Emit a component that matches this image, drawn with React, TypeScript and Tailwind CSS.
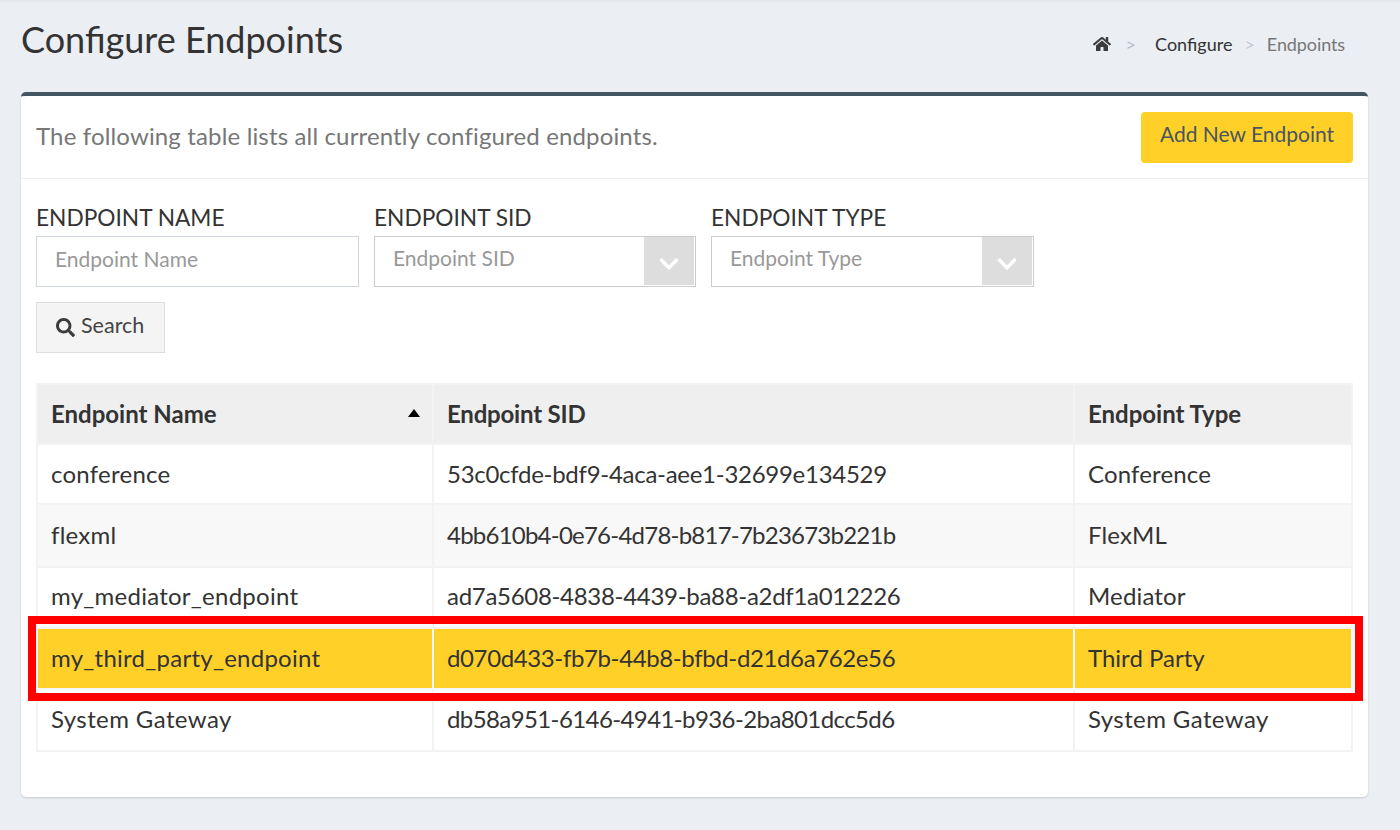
import { FaChevronDown, FaHome, FaSearch } from "react-icons/fa";

const rows = [
  { name: "conference", sid: "53c0cfde-bdf9-4aca-aee1-32699e134529", type: "Conference", h: "h-[60px]", bg: "bg-white", pad: "pb-0", sidTrack: "tracking-[-0.28px]" },
  { name: "flexml", sid: "4bb610b4-0e76-4d78-b817-7b23673b221b", type: "FlexML", h: "h-[63px]", bg: "bg-[#f8f8f8]", pad: "pb-[2px]", sidTrack: "tracking-[-0.77px]" },
  { name: "my_mediator_endpoint", sid: "ad7a5608-4838-4439-ba88-a2df1a012226", type: "Mediator", h: "h-[61px]", bg: "bg-white", pad: "pb-[4px]", sidTrack: "tracking-[-0.3px]" },
];

function SelectBox({ label, placeholder, width }: { label: string; placeholder: string; width: string }) {
  return (
    <div className={width}>
      <div className="text-[22.7px] leading-[26px] text-[#333333] h-[31px]">{label}</div>
      <div className="flex h-[51px] border border-[#cccccc] bg-white justify-between pr-[1px] pb-[1px]">
        <span className="pl-[18px] pt-[7px] text-[21px] leading-[28px] text-[#999999]">{placeholder}</span>
        <span className="w-[50px] bg-[#dddddd] flex items-center justify-center text-white pt-[6px]">
          <FaChevronDown size={22} />
        </span>
      </div>
    </div>
  );
}

export default function App() {
  return (
    <div className="min-h-[830px] bg-[#ebeef3] font-['Lato','Liberation_Sans',sans-serif] border-t-2 border-[#e3e6ea] pl-[21px] pr-[32px]">
      <div className="flex justify-between h-[90px]">
        <h1 className="text-[36px] leading-[40px] mt-[17px] text-[#333333]">Configure Endpoints</h1>
        <div className="flex items-center h-[24px] mt-[30px] mr-[23px] text-[18px] text-[#333333]">
          <FaHome size={18} className="text-[#3c3c3c]" />
          <span className="ml-[15px] text-[#b9bdc4]">&gt;</span>
          <span className="ml-[19px]">Configure</span>
          <span className="ml-[12px] text-[#c4c7cc]">&gt;</span>
          <span className="ml-[12px] text-[#777777] tracking-[-0.1px]">Endpoints</span>
        </div>
      </div>

      <div className="relative h-[705px] bg-white border-t-4 border-[#435563] rounded-[5px] shadow-[0_1px_2px_rgba(0,0,0,0.15)]">
        <div className="flex items-center justify-between h-[83px] border-b border-[#f1f1f1] pl-[15px] pr-[15px]">
          <p className="text-[24px] tracking-[0.15px] text-[#777777] pb-[2px]">The following table lists all currently configured endpoints.</p>
          <button className="w-[212px] h-[51px] pb-[6px] rounded-[4px] bg-[#ffd128] text-[21px] text-[#4a5560]">Add New Endpoint</button>
        </div>

        <div className="pl-[15px] pt-[26px]">
          <div className="flex gap-[15px]">
            <div className="w-[323px]">
              <div className="text-[22.7px] leading-[26px] text-[#333333] h-[31px]">ENDPOINT NAME</div>
              <div className="h-[51px] border border-[#cfd6e0] bg-white pl-[18px] pt-[8px] text-[21px] leading-[28px] text-[#999999]">Endpoint Name</div>
            </div>
            <SelectBox label="ENDPOINT SID" placeholder="Endpoint SID" width="w-[322px]" />
            <SelectBox label="ENDPOINT TYPE" placeholder="Endpoint Type" width="w-[323px]" />
          </div>

          <button className="flex items-center gap-[6px] mt-[15px] w-[129px] h-[51px] pl-[19px] pb-[4px] border border-[#dddddd] bg-[#f4f4f4] text-[21.5px] text-[#444444]">
            <FaSearch size={19} className="text-[#3c3c3c] mt-[3px]" />
            Search
          </button>
        </div>

        <div className="px-[15px] pt-[30px]">
          <table className="w-[1317px] table-fixed border-collapse border-2 border-[#f3f3f3] text-[24px] text-[#333333]">
            <colgroup>
              <col className="w-[396px]" />
              <col className="w-[641px]" />
              <col className="w-[278px]" />
            </colgroup>
            <thead>
              <tr className="h-[60px] bg-[#efefef] font-bold text-left">
                <th className="relative border-2 border-[#f3f3f3] pl-[13px]">
                  Endpoint Name
                  <span className="absolute right-[12px] top-[24px] w-0 h-0 border-x-[6px] border-x-transparent border-b-[8px] border-b-black" />
                </th>
                <th className="border-2 border-[#f3f3f3] pl-[13px] tracking-[-0.2px]">Endpoint SID</th>
                <th className="border-2 border-[#f3f3f3] pl-[13px]">Endpoint Type</th>
              </tr>
            </thead>
            <tbody>
              {rows.map((r) => (
                <tr key={r.name} className={`${r.h} ${r.bg}`}>
                  <td className={`border-2 border-[#f3f3f3] pl-[13px] tracking-[0.25px] ${r.pad}`}>{r.name}</td>
                  <td className={`border-2 border-[#f3f3f3] pl-[13px] ${r.sidTrack} ${r.pad}`}>{r.sid}</td>
                  <td className={`border-2 border-[#f3f3f3] pl-[13px] tracking-[0.15px] ${r.pad}`}>{r.type}</td>
                </tr>
              ))}
              <tr className="h-[61px] bg-[#ffd128]">
                <td className="border-2 border-[#f8f8f8] pl-[13px] pb-[2px] tracking-[0.25px]">my_third_party_endpoint</td>
                <td className="border-2 border-[#f8f8f8] pl-[13px] pb-[2px] tracking-[-0.38px]">d070d433-fb7b-44b8-bfbd-d21d6a762e56</td>
                <td className="border-2 border-[#f8f8f8] pl-[13px] pb-[2px] tracking-[0px]">Third Party</td>
              </tr>
              <tr className="h-[62px] bg-white">
                <td className="border-2 border-[#f3f3f3] pl-[13px] tracking-[0.4px] pb-[2px]">System Gateway</td>
                <td className="border-2 border-[#f3f3f3] pl-[13px] tracking-[-0.6px] pb-[2px]">db58a951-6146-4941-b936-2ba801dcc5d6</td>
                <td className="border-2 border-[#f3f3f3] pl-[13px] tracking-[0.4px] pb-[2px]">System Gateway</td>
              </tr>
            </tbody>
          </table>
        </div>

        {/* annotation box drawn over the highlighted row */}
        <div className="absolute left-[7px] top-[520px] w-[1335px] h-[85px] border-[8px] border-[#ff0000] pointer-events-none" />
      </div>
    </div>
  );
}
